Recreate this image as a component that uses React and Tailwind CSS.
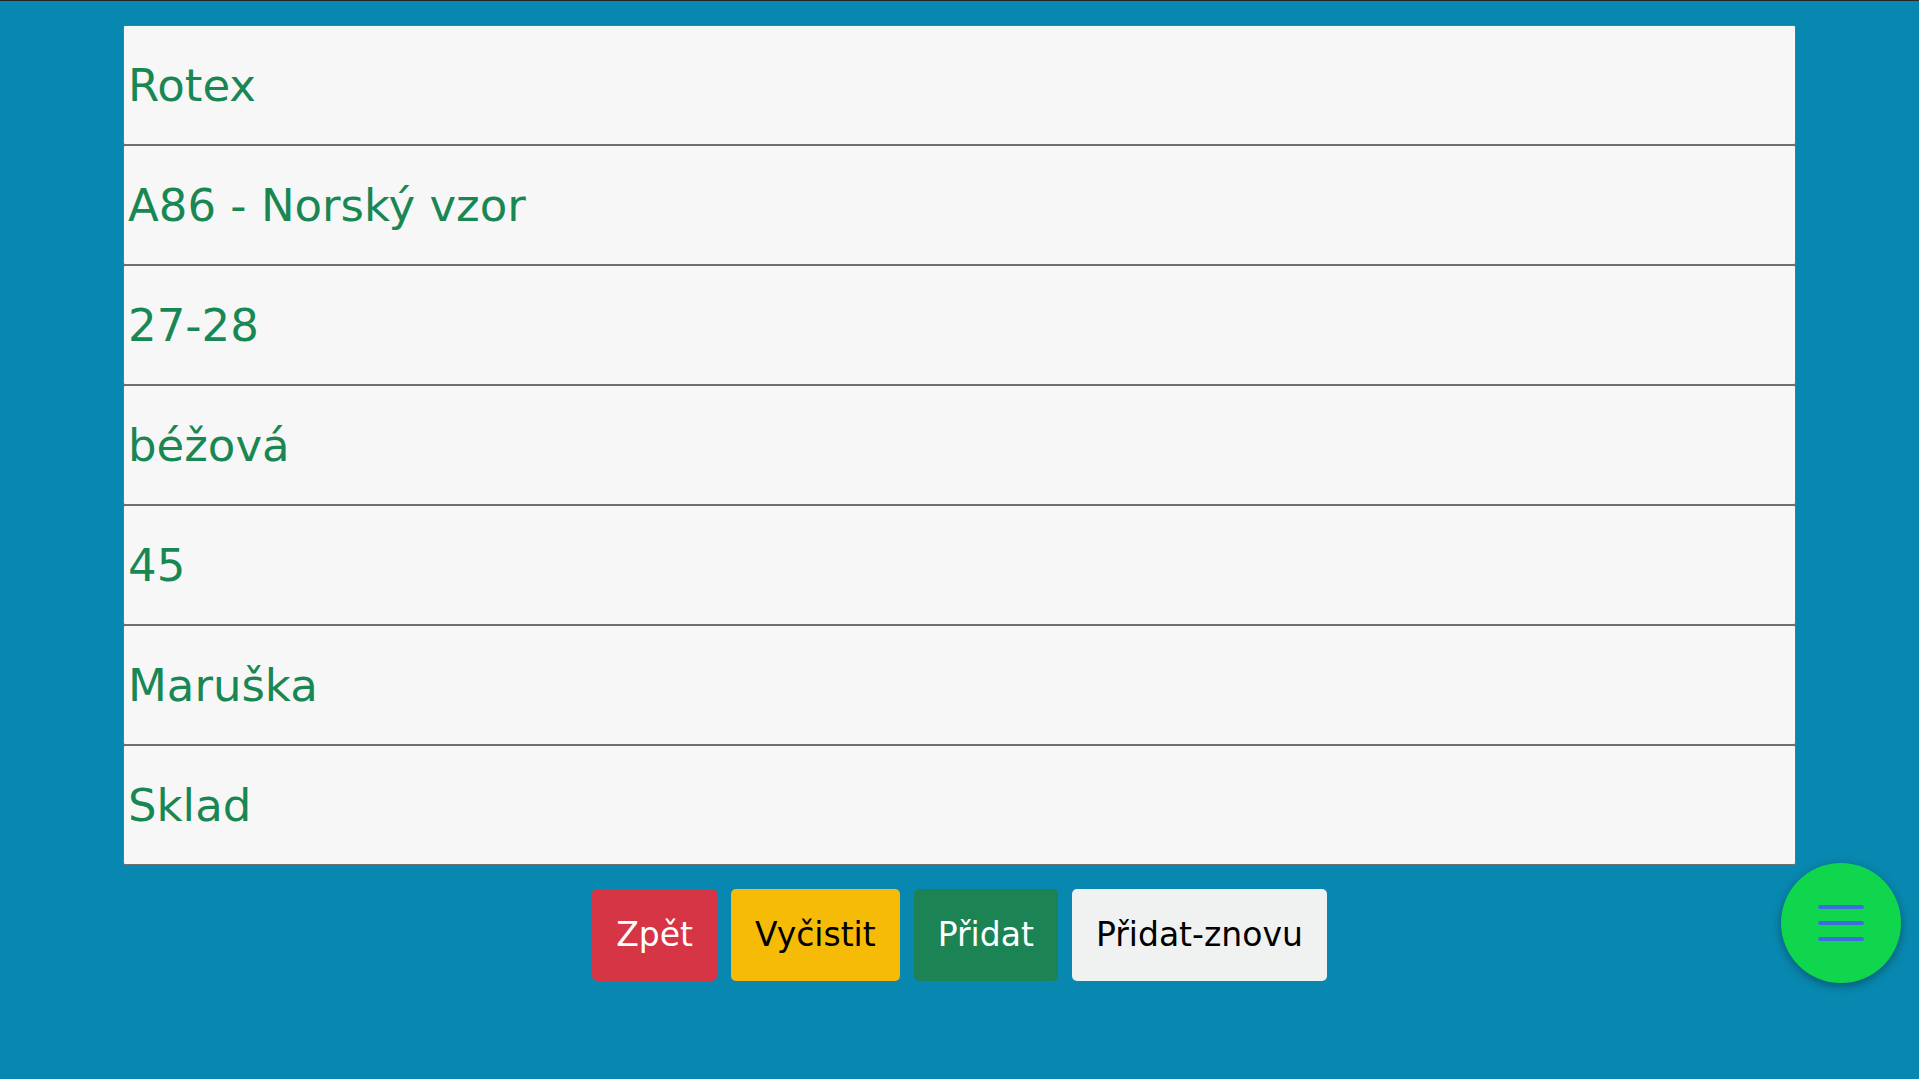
import React from 'react';

const fields = ['Rotex', 'A86 - Norský vzor', '27-28', 'béžová', '45', 'Maruška', 'Sklad'];

export default function App() {
    return (
        <div className="min-h-screen bg-[#0888b0] border-t border-[#1f2529] pt-[24px] font-['DejaVu_Sans',sans-serif]">
            <div className="w-[1673px] mx-auto flex flex-col">
                {fields.map((f, i) => (
                    <div
                        key={i}
                        className="h-[120px] flex items-center pl-[4px] pt-[2px] bg-[#f7f7f7] border border-[#6f6f6f] rounded-[2px] text-[45px] text-[#198754]"
                    >
                        {f}
                    </div>
                ))}
            </div>

            <div className="flex justify-center gap-[14px] mt-[24px]">
                <button className="h-[92px] px-6 rounded-[5px] bg-[#d63545] text-white text-[33px]">Zpět</button>
                <button className="h-[92px] px-6 rounded-[5px] bg-[#f6bb07] text-black text-[33px]">Vyčistit</button>
                <button className="h-[92px] px-6 rounded-[5px] bg-[#1b8354] text-white text-[33px]">Přidat</button>
                <button className="h-[92px] px-6 rounded-[5px] bg-[#f0f1f1] text-black text-[33px]">Přidat-znovu</button>
            </div>

            {/* floating menu button */}
            <button className="fixed right-[18px] bottom-[96px] w-[120px] h-[120px] rounded-full bg-[#0fd64d] shadow-[0_3px_10px_rgba(0,0,0,0.35)] flex flex-col items-center justify-center gap-[12px]">
                <span className="block w-[46px] h-[4px] rounded-full bg-[#4169e1]" />
                <span className="block w-[46px] h-[4px] rounded-full bg-[#4169e1]" />
                <span className="block w-[46px] h-[4px] rounded-full bg-[#4169e1]" />
            </button>
        </div>
    );
}
